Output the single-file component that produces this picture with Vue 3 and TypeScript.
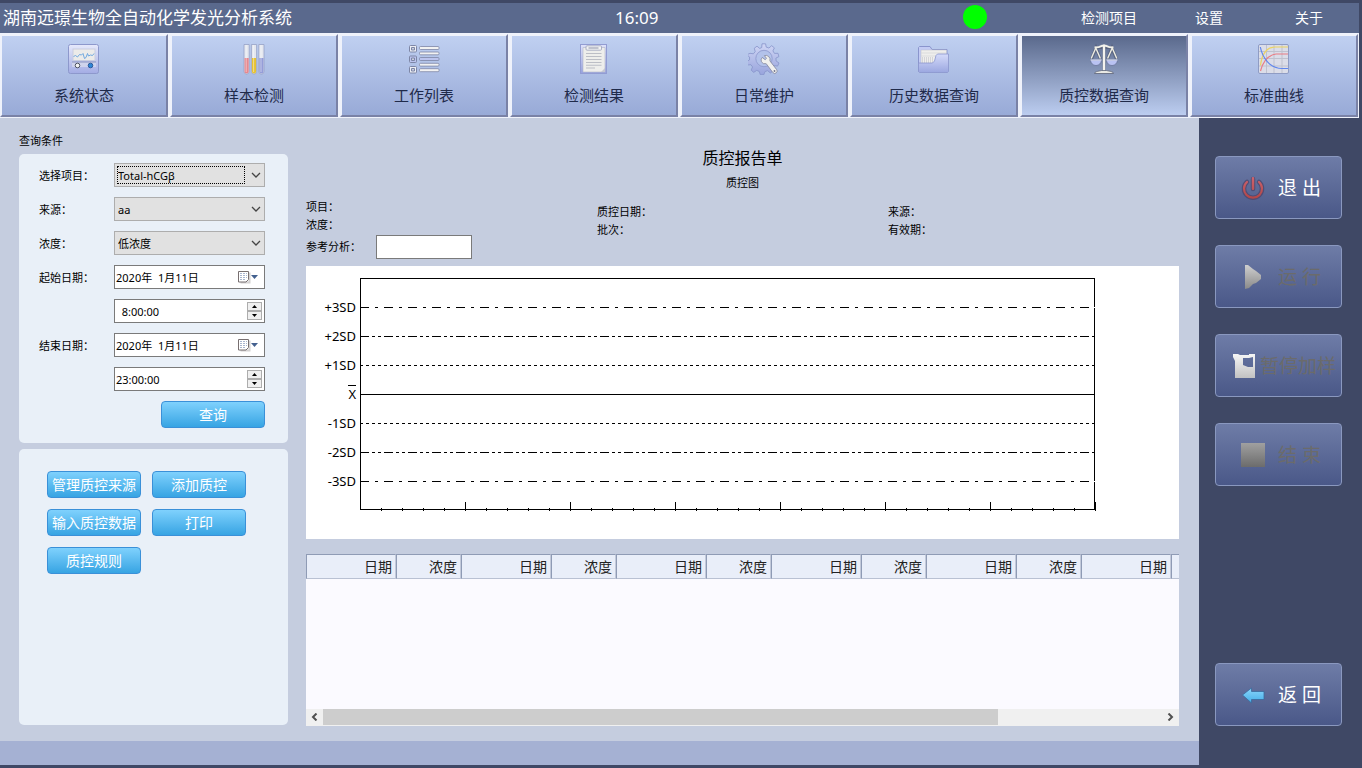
<script setup lang="ts">
import { ref } from 'vue'

interface NavItem { icon: string; label: string }

const navItems: NavItem[] = [
  { icon: 'monitor', label: '系统状态' },
  { icon: 'tubes', label: '样本检测' },
  { icon: 'list', label: '工作列表' },
  { icon: 'clipboard', label: '检测结果' },
  { icon: 'gear', label: '日常维护' },
  { icon: 'folder', label: '历史数据查询' },
  { icon: 'scales', label: '质控数据查询' },
  { icon: 'curves', label: '标准曲线' },
]
const active = ref('scales')

const project = ref('Total-hCGβ')
const source = ref('aa')
const level = ref('低浓度')
const startDate = ref('2020年  1月11日')
const startTime = ref('  8:00:00')
const endDate = ref('2020年  1月11日')
const endTime = ref('23:00:00')
const reference = ref('')

const tools = ['管理质控来源', '添加质控', '输入质控数据', '打印', '质控规则']

const sdLines = [
  { label: '+3SD', y: 41, dash: '9 6 3 6' },
  { label: '+2SD', y: 70, dash: '9 3 3 3 3 3' },
  { label: '+1SD', y: 99, dash: '3 3' },
  { label: 'X', y: 128, dash: 'none' },
  { label: '-1SD', y: 157, dash: '3 3' },
  { label: '-2SD', y: 186, dash: '9 3 3 3 3 3' },
  { label: '-3SD', y: 215, dash: '9 6 3 6' },
]
const ticks = Array.from({ length: 35 }, (_, i) => ({ x: 54 + (i + 1) * 21, major: (i + 1) % 5 === 0 }))

const columns = Array.from({ length: 11 }, (_, i) => (i % 2 === 0 ? '日期' : '浓度'))
const gridBox = ref<HTMLElement | null>(null)
function scrollGrid(dx: number) {
  if (gridBox.value) gridBox.value.scrollLeft += dx
}
</script>

<template>
  <div class="app">
    <header class="titlebar">
      <h1>湖南远璟生物全自动化学发光分析系统</h1>
      <time class="clock">16:09</time>
      <span class="lamp" role="img" aria-label="在线"></span>
      <a href="#items">检测项目</a>
      <a href="#settings">设置</a>
      <a href="#about">关于</a>
    </header>

    <nav class="nav">
      <button
        v-for="item in navItems"
        :key="item.icon"
        type="button"
        class="tile"
        :class="{ on: item.icon === active }"
        @click="active = item.icon"
      >
        <svg v-if="item.icon === 'monitor'" width="32" height="32" viewBox="0 0 32 32">
          <defs>
            <linearGradient id="mon" x1="0" y1="0" x2="0" y2="1"><stop offset="0" stop-color="#e6e9fb" /><stop offset="1" stop-color="#a3ace4" /></linearGradient>
          </defs>
          <rect x="0.5" y="1.5" width="30" height="29" rx="2" fill="url(#mon)" stroke="#8d98cc" />
          <rect x="5" y="6" width="22" height="11.5" fill="#ecebe9" stroke="#c9cde0" />
          <path d="M5.500 13.500l2-1 2 1.500 2-2.500 2 .5 1.500-1.500 1.500 5 1.500-1 1.500-4 1 2.500 2-1 2 .5 1.500-2" fill="none" stroke="#6fa8e0" />
          <path d="M4 19h24v5H4z" fill="#d5d8ec" opacity="0.8" />
          <path d="M4 19h24" stroke="#8791bd" />
          <circle cx="9.500" cy="22.500" r="2.300" fill="#f4f4f4" stroke="#4e5262" />
          <circle cx="22.500" cy="22.500" r="2.300" fill="#2d86d8" stroke="#2d5a98" />
        </svg>
        <svg v-else-if="item.icon === 'tubes'" width="32" height="32" viewBox="0 0 32 32">
          <g stroke="#96a1c6" stroke-width="0.8">
            <path d="M6 1.500h5.200V28.500a2.600 2.600 0 0 1-5.200 0z" fill="#e4e7ef" />
            <path d="M13.400 1.500h5.200V28.500a2.600 2.600 0 0 1-5.200 0z" fill="#e4e7ef" />
            <path d="M20.800 1.500H26V28.500a2.600 2.600 0 0 1-5.200 0z" fill="#e4e7ef" />
          </g>
          <path d="M6.500 15h4.200v13.500a2.100 2.100 0 0 1-4.200 0z" fill="#e68890" />
          <path d="M13.900 15h4.200v13.500a2.100 2.100 0 0 1-4.200 0z" fill="#e6c232" />
          <path d="M21.300 15h4.200v13.500a2.100 2.100 0 0 1-4.200 0z" fill="#959dd8" />
          <path d="M8.200 2v27M15.600 2v27M23 2v27" stroke="#fff" stroke-width="1" opacity="0.45" />
        </svg>
        <svg v-else-if="item.icon === 'list'" width="32" height="32" viewBox="0 0 32 32">
          <g stroke="#7d86a6">
            <rect x="1.500" y="2.500" width="7" height="6.500" rx="1" fill="#eceef4" />
            <rect x="1.500" y="13" width="7" height="6.500" rx="1" fill="#bcc4ee" />
            <rect x="1.500" y="23.500" width="7" height="6.500" rx="1" fill="#eceef4" />
            <path d="M3.500 4.500h3v2.500h-3zM3.500 15h3v2.500h-3zM3.500 25.500h3V28h-3z" fill="#c9cede" />
          </g>
          <g stroke="#7d86a6" stroke-width="0.8" fill="#f2f2f2">
            <rect x="11.500" y="3.500" width="19.500" height="3" rx="1" />
            <rect x="11.500" y="9" width="19.500" height="2.800" rx="1" />
            <rect x="11.500" y="14.500" width="19.500" height="3" rx="1" fill="#bcc4ee" />
            <rect x="11.500" y="20.300" width="19.500" height="2.800" rx="1" />
            <rect x="11.500" y="25.700" width="19.500" height="3" rx="1" />
          </g>
        </svg>
        <svg v-else-if="item.icon === 'clipboard'" width="32" height="32" viewBox="0 0 32 32">
          <defs>
            <linearGradient id="clip" x1="0" y1="0" x2="0" y2="1"><stop offset="0" stop-color="#dfe2fa" /><stop offset="1" stop-color="#97a2de" /></linearGradient>
          </defs>
          <rect x="2.500" y="1.500" width="26" height="29" fill="url(#clip)" stroke="#929cd2" />
          <path d="M5 4.500h22V29H5z" fill="#eeeeec" stroke="#b2b5c8" stroke-width="0.6" />
          <path d="M23 29l4-4v4z" fill="#c5c7d2" />
          <rect x="8" y="2.800" width="15.500" height="4.400" rx="1" fill="#f2f2f2" stroke="#9ba1ba" stroke-width="0.8" />
          <path d="M10.500 5h10" stroke="#8c91a8" />
          <path d="M8 10.500h15.500M8 13.500h15.500M8 16.500h15.500M8 19.500h15.500M8 22.300h15.500M8 25h9" stroke="#bcbec6" stroke-width="1.100" />
        </svg>
        <svg v-else-if="item.icon === 'gear'" width="32" height="32" viewBox="0 0 32 32">
          <defs>
            <linearGradient id="gearfill" x1="0" y1="0" x2="0" y2="1"><stop offset="0" stop-color="#d0d6f5" /><stop offset="1" stop-color="#98a4dc" /></linearGradient>
          </defs>
          <path fill="url(#gearfill)" stroke="#8793c9" stroke-width="0.8" stroke-linejoin="round" d="M14 .8h3.600l.6 3.300 2.700.9L23.700 2.700l2.700 2.200-1.500 3 1.600 2.500 3.500-.1.900 3.300-3 1.500.2 2.900 2.900 2-1.400 3.100-3.400-.5-2 2.100 1 3.300-2.900 2-2.600-2.300-2.700.8-1.200 3.200h-3.500l-1.100-3.300-2.500-1-3 2-2.600-2.300 1.500-3.100-1.700-2.300-3.400.3-1-3.300 3-1.800.1-2.900-2.800-2.200L2 10.300l3.400.5L7.200 8.600 6.300 5.200 9 3.200l2.700 2.200 2-.8z" />
          <circle cx="16" cy="15.500" r="8.200" fill="#b3c2ea" stroke="#8b97cc" stroke-width="0.800" />
          <path d="M13.300 18.600a4.300 4.300 0 0 1 1-4.200l2.800 2.300 1.400-1.300-2.100-2.800a4.300 4.300 0 0 1 5.500 5.300l6.600 8.500a2.400 2.400 0 0 1-3.600 3.200l-6.700-8.900a4.400 4.400 0 0 1-4.900-2.100z" fill="#f0f0ee" stroke="#82859c" stroke-width="0.800" />
          <circle cx="26.500" cy="28" r="0.900" fill="#70748c" />
        </svg>
        <svg v-else-if="item.icon === 'folder'" width="32" height="32" viewBox="0 0 32 32">
          <defs>
            <linearGradient id="fold" x1="0" y1="0" x2="0" y2="1"><stop offset="0" stop-color="#d5dbfa" /><stop offset="1" stop-color="#9ba7e0" /></linearGradient>
          </defs>
          <path d="M.5 4.500l1-1h10.500l2 3h15v22H.5z" fill="#c3cbf4" stroke="#8a95cd" />
          <path d="M3 7h25.500v4l2 2v9H3z" fill="#efeeec" stroke="#b9bccb" stroke-width="0.500" />
          <path d="M3 10h25M3 13h25" stroke="#d4d4d8" stroke-width="0.700" />
          <path d="M4.500 14v6M6.500 14v6M8.500 14v6M10.500 14v6M12.500 14v6M14.500 14v6" stroke="#c8c9d0" stroke-width="0.700" />
          <path d="M.5 20h14l2-2 1.500-5.500 1.500-1.500H30.500v17.500l-1 1H1.500l-1-1z" fill="url(#fold)" stroke="#8a95cd" stroke-width="0.800" />
        </svg>
        <svg v-else-if="item.icon === 'scales'" width="32" height="32" viewBox="0 0 32 32">
          <g stroke="#4b5266" stroke-width="3.200" fill="none" opacity="0.55">
            <path d="M16 2v26M7 4.500h18M3.500 16L8 5l4.500 11M19.500 16L24 5l4.500 11" />
          </g>
          <path d="M3.200 15.500L7.800 5l4.600 10.500M19.600 15.500L24.200 5l4.600 10.500" fill="none" stroke="#eeede2" stroke-width="1.400" />
          <path d="M6.500 4.600c4-.2 6-1 7.500-1.800h4c1.500.8 3.500 1.600 7.500 1.800" fill="none" stroke="#f1f0e8" stroke-width="2" />
          <path d="M14.800 2.200L16 1l1.200 1.200v26.300h-2.400z" fill="#f4f3ee" />
          <path d="M2.500 17h11a5.500 5.500 0 0 1-11 0zM18.500 17h11a5.500 5.500 0 0 1-11 0z" fill="#b9c2f2" stroke="#596388" stroke-width="0.600" />
          <path d="M2.500 17h11M18.500 17h11" stroke="#eceefa" />
          <path d="M6.500 30.500c0-1.800 3.500-2.200 7-3h5c3.500.8 7 1.200 7 3z" fill="#e9e9e4" stroke="#5c6377" stroke-width="0.800" />
        </svg>
        <svg v-else width="32" height="32" viewBox="0 0 32 32">
          <rect x="0.500" y="1.500" width="30" height="29" rx="1.500" fill="#dbdde8" stroke="#8f9cc4" />
          <path d="M8.500 2v28M16 2v28M24 2v28M1 8.500h29M1 15.500h29M1 23h29" stroke="#bfc1ce" />
          <path d="M2.500 22.500C4 10 9 4.500 17 4h13" fill="none" stroke="#ecd460" stroke-width="1.200" />
          <path d="M2.500 28C4.500 20 8.500 12.500 18 11h12" fill="none" stroke="#ea7d84" stroke-width="1.200" />
          <path d="M2.300 4C4.500 15 12 25.300 24 25.500h6" fill="none" stroke="#5f86ee" stroke-width="1.200" />
        </svg>
        <span>{{ item.label }}</span>
      </button>
    </nav>

    <div class="body">
      <div class="workspace">
        <main class="main">
          <section class="left">
            <h2>查询条件</h2>
            <form class="panel query" @submit.prevent>
              <label for="project">选择项目：</label>
              <div class="combo focused">
                <select id="project" v-model="project"><option>Total-hCGβ</option></select>
                <svg class="chev" width="10" height="6" viewBox="0 0 10 6"><path d="M1 1l4 4 4-4" /></svg>
              </div>
              <label for="source">来源：</label>
              <div class="combo">
                <select id="source" v-model="source"><option>aa</option></select>
                <svg class="chev" width="10" height="6" viewBox="0 0 10 6"><path d="M1 1l4 4 4-4" /></svg>
              </div>
              <label for="level">浓度：</label>
              <div class="combo">
                <select id="level" v-model="level"><option>低浓度</option></select>
                <svg class="chev" width="10" height="6" viewBox="0 0 10 6"><path d="M1 1l4 4 4-4" /></svg>
              </div>
              <label for="start-date">起始日期：</label>
              <div class="field">
                <input id="start-date" v-model="startDate" type="text" />
                <button type="button" class="cal" aria-label="选择起始日期">
                  <svg width="22" height="14" viewBox="0 0 22 14">
                    <path d="M2.500 12.500h9v-10" fill="none" stroke="#b8b4b4" stroke-width="2" opacity="0.6" />
                    <path d="M.5 1.500h10v8l-2.500 2.500H.5z" fill="#fff" stroke="#776f70" />
                    <path d="M2 3.500h7M2 5.500h7M2 7.500h7M2 9.500h5" stroke="#a9b6cf" stroke-dasharray="2 1" />
                    <path d="M13 5h7l-3.500 4z" fill="#44618f" />
                  </svg>
                </button>
              </div>
              <span></span>
              <div class="field">
                <input v-model="startTime" type="text" aria-label="起始时间" />
                <span class="spin">
                  <button type="button" aria-label="增加"><svg width="5" height="3" viewBox="0 0 5 3"><path d="M0 3h5L2.500 0z" /></svg></button>
                  <button type="button" aria-label="减少"><svg width="5" height="3" viewBox="0 0 5 3"><path d="M0 0h5L2.500 3z" /></svg></button>
                </span>
              </div>
              <label for="end-date">结束日期：</label>
              <div class="field">
                <input id="end-date" v-model="endDate" type="text" />
                <button type="button" class="cal" aria-label="选择结束日期">
                  <svg width="22" height="14" viewBox="0 0 22 14">
                    <path d="M2.500 12.500h9v-10" fill="none" stroke="#b8b4b4" stroke-width="2" opacity="0.6" />
                    <path d="M.5 1.500h10v8l-2.500 2.500H.5z" fill="#fff" stroke="#776f70" />
                    <path d="M2 3.500h7M2 5.500h7M2 7.500h7M2 9.500h5" stroke="#a9b6cf" stroke-dasharray="2 1" />
                    <path d="M13 5h7l-3.500 4z" fill="#44618f" />
                  </svg>
                </button>
              </div>
              <span></span>
              <div class="field">
                <input v-model="endTime" type="text" aria-label="结束时间" />
                <span class="spin">
                  <button type="button" aria-label="增加"><svg width="5" height="3" viewBox="0 0 5 3"><path d="M0 3h5L2.500 0z" /></svg></button>
                  <button type="button" aria-label="减少"><svg width="5" height="3" viewBox="0 0 5 3"><path d="M0 0h5L2.500 3z" /></svg></button>
                </span>
              </div>
              <button type="submit" class="blue search">查询</button>
            </form>
            <div class="panel tools">
              <button v-for="t in tools" :key="t" type="button" class="blue">{{ t }}</button>
            </div>
          </section>

          <section class="report">
            <h2>质控报告单</h2>
            <h3>质控图</h3>
            <div class="info">
              <div>
                <p>项目：</p>
                <p>浓度：</p>
                <div class="ref">
                  <label for="reference">参考分析：</label>
                  <input id="reference" v-model="reference" type="text" />
                </div>
              </div>
              <div class="low">
                <p>质控日期：</p>
                <p>批次：</p>
              </div>
              <div class="low">
                <p>来源：</p>
                <p>有效期：</p>
              </div>
            </div>

            <div class="chart">
              <svg width="100%" height="273" viewBox="0 0 873 273" shape-rendering="crispEdges">
                <rect x="54.5" y="12.5" width="734" height="231" fill="none" stroke="#000" />
                <g v-for="l in sdLines" :key="l.label">
                  <path :d="`M55 ${l.y + 0.5}H789`" stroke="#fff" />
                  <path :d="`M54 ${l.y + 0.5}H789`" stroke="#000" :stroke-dasharray="l.dash" />
                  <text x="50" :y="l.y + 5" text-anchor="end">{{ l.label }}</text>
                </g>
                <path d="M42 119.500h8" stroke="#000" />
                <path
                  v-for="t in ticks"
                  :key="t.x"
                  :d="t.major ? `M${t.x + 0.5} 236v9` : `M${t.x + 0.5} 242v3`"
                  stroke="#000"
                />
              </svg>
            </div>

            <div class="grid">
              <div ref="gridBox" class="gridbox">
                <table>
                  <thead>
                    <tr>
                      <th v-for="(c, i) in columns" :key="i" :class="i % 2 ? 'narrow' : 'wide'" scope="col">{{ c }}</th>
                      <th></th>
                    </tr>
                  </thead>
                </table>
              </div>
              <div class="scroll">
                <button type="button" aria-label="向左滚动" @click="scrollGrid(-40)">
                  <svg width="7" height="8" viewBox="0 0 7 8"><path d="M5.500 .5L2 4l3.500 3.500" /></svg>
                </button>
                <div class="track"><div class="thumb"></div></div>
                <button type="button" aria-label="向右滚动" @click="scrollGrid(40)">
                  <svg width="7" height="8" viewBox="0 0 7 8"><path d="M1.500 .5L5 4 1.500 7.500" /></svg>
                </button>
              </div>
            </div>
          </section>
        </main>
        <footer class="status"></footer>
      </div>

      <aside class="side">
        <button type="button" class="act">
          <svg width="24" height="24" viewBox="0 0 24 24">
            <defs>
              <linearGradient id="pw" gradientUnits="userSpaceOnUse" x1="0" y1="0" x2="0" y2="24"><stop offset="0" stop-color="#cf6570" /><stop offset="1" stop-color="#b04444" /></linearGradient>
            </defs>
            <g fill="none" stroke-linecap="round">
              <path d="M6 6a9 9 0 1 0 12 0M12 3v10" stroke="#4e466c" stroke-width="4.500" opacity="0.8" />
              <path d="M6 6a9 9 0 1 0 12 0" stroke="url(#pw)" stroke-width="2.200" />
            </g>
            <rect x="10.800" y="1" width="2.400" height="13" rx="1" fill="url(#pw)" />
          </svg>
          <span>退 出</span>
        </button>
        <button type="button" class="act" disabled>
          <svg width="24" height="24" viewBox="0 0 24 24">
            <defs>
              <linearGradient id="pl" x1="0" y1="0" x2="0" y2="1"><stop offset="0" stop-color="#cfcfcf" /><stop offset="1" stop-color="#8a8a8a" /></linearGradient>
            </defs>
            <path d="M4 0h3l5 4 3 2 5 4v4l-5 4-3 1-4 4-4 1z" fill="url(#pl)" />
          </svg>
          <span>运 行</span>
        </button>
        <button type="button" class="act tight" disabled>
          <svg width="24" height="24" viewBox="0 0 24 24">
            <defs>
              <linearGradient id="ps" x1="0" y1="0" x2="0" y2="1"><stop offset="0" stop-color="#f6f6f6" /><stop offset="1" stop-color="#c2c2c2" /></linearGradient>
            </defs>
            <path fill-rule="evenodd" d="M0 0h5l2 1h9V0h6v24H2V7L0 3zM10 4v7l5 2h5V3l-4 1z" fill="url(#ps)" />
          </svg>
          <span>暂停加样</span>
        </button>
        <button type="button" class="act" disabled>
          <svg width="24" height="24" viewBox="0 0 24 24">
            <defs>
              <linearGradient id="st" x1="0" y1="0" x2="0" y2="1"><stop offset="0" stop-color="#a0a0a0" /><stop offset="1" stop-color="#6c6c6c" /></linearGradient>
            </defs>
            <rect width="24" height="24" fill="url(#st)" />
          </svg>
          <span>结 束</span>
        </button>
        <button type="button" class="act back">
          <svg width="24" height="24" viewBox="0 0 24 24">
            <defs>
              <linearGradient id="bk" x1="0" y1="0" x2="0" y2="1"><stop offset="0" stop-color="#8bd6fb" /><stop offset="1" stop-color="#44aee8" /></linearGradient>
            </defs>
            <path d="M1.500 12L10.500 5v3.500H23v8H10.500V20z" fill="url(#bk)" stroke="#3a6a9c" stroke-width="0.800" />
          </svg>
          <span>返 回</span>
        </button>
      </aside>
    </div>
  </div>
</template>

<style>
body {
  margin: 0;
  background: #3f4865;
}
</style>

<style scoped>
.app {
  display: flex;
  flex-direction: column;
  box-sizing: border-box;
  min-height: 100vh;
  padding-top: 3px;
  background: #3f4865;
  color: #000;
  font-family: "Noto Sans", "Noto Sans CJK SC", sans-serif;
  font-size: 11px;
}
.app * {
  box-sizing: border-box;
}
h1, h2, h3, p {
  margin: 0;
  font-weight: 400;
}
button, input, select {
  margin: 0;
  padding: 0;
  font: inherit;
  color: inherit;
}
svg {
  display: block;
  flex: none;
}

.titlebar {
  display: grid;
  grid-template-columns: 612fr 348fr 118fr 114fr 100fr 64fr;
  align-items: center;
  height: 30px;
  margin-right: 3px;
  padding-left: 3px;
  background: #5a698d;
  color: #fff;
  white-space: nowrap;
}
.titlebar h1, .clock {
  font-size: 17px;
  line-height: 24px;
}
.titlebar a {
  color: #fff;
  font-size: 14px;
  line-height: 24px;
  text-decoration: none;
}
.lamp {
  width: 24px;
  height: 24px;
  border-radius: 50%;
  background: #0f0;
  margin-bottom: 2px;
}

.nav {
  display: flex;
  gap: 2px;
  margin-right: 3px;
  padding: 1px 1px 1px 0;
  background: #eff2fb;
}
.tile {
  flex: 1;
  display: flex;
  flex-direction: column;
  align-items: center;
  gap: 8px;
  height: 83px;
  padding-top: 7px;
  border: 2px solid;
  border-color: #eff2fb #7a82a6 #7a82a6 #eff2fb;
  background: linear-gradient(#c0d0f1, #98aad7);
  color: #1f2a4a;
  font-size: 15px;
  line-height: 24px;
}
.tile.on {
  background: linear-gradient(#5a698c, #bccdf0);
}

.body {
  flex: 1;
  display: flex;
}
.workspace {
  flex: 1;
  min-width: 0;
  display: flex;
  flex-direction: column;
  padding-bottom: 3px;
}
.main {
  flex: 1;
  display: flex;
  gap: 18px;
  padding: 0 20px 15px 19px;
  background: #c5cddf;
}
.status {
  height: 24px;
  background: #a5b1d3;
}

.left {
  flex: none;
  width: 269px;
  display: flex;
  flex-direction: column;
  padding: 10px 0 1px;
}
.left h2 {
  font-size: 11px;
  line-height: 26px;
}
.panel {
  display: grid;
  align-content: start;
  border-radius: 5px;
  background: #e9f0f8;
}
.query {
  grid-template-columns: 75px minmax(0, 1fr);
  gap: 10px 0;
  align-items: center;
  padding: 9px 23px 15px 20px;
}
.combo, .field {
  position: relative;
  display: flex;
  align-items: center;
  height: 24px;
}
.combo select {
  width: 100%;
  height: 24px;
  padding: 0 20px 0 3px;
  border: 1px solid #adadad;
  border-radius: 0;
  background: #e1e1e1;
  appearance: none;
}
.combo.focused::after {
  content: "";
  position: absolute;
  inset: 3px 20px 3px 3px;
  border: 1px dotted #000;
  pointer-events: none;
}
.chev {
  position: absolute;
  right: 4px;
  pointer-events: none;
}
.chev path {
  fill: none;
  stroke: #444;
  stroke-width: 1.3;
}
.field {
  border: 1px solid #7a7a7a;
  background: #fff;
}
.field input {
  flex: 1;
  min-width: 0;
  height: 22px;
  padding-left: 1px;
  border: 0;
  background: none;
  white-space: pre;
}
.cal {
  flex: none;
  margin-right: 4px;
  border: 0;
  background: none;
}
.spin {
  flex: none;
  display: grid;
  margin-right: 2px;
}
.spin button {
  display: grid;
  place-items: center;
  width: 15px;
  height: 9px;
  border: 1px solid #adadad;
  background: #f0f0f0;
}
.blue {
  height: 27px;
  border: 1px solid #3a90d8;
  border-radius: 4px;
  background: linear-gradient(#7fd1fd, #37a4e3);
  color: #fff;
  font-size: 14px;
  line-height: 24px;
  white-space: nowrap;
}
.search {
  grid-column: 2;
  justify-self: end;
  width: 104px;
}
.tools {
  flex: 1;
  grid-template-columns: 94px 94px;
  gap: 11px;
  margin-top: 6px;
  padding: 22px 28px;
}

.report {
  flex: 1;
  min-width: 0;
  display: flex;
  flex-direction: column;
  padding-top: 28px;
}
.report h2 {
  font-size: 16px;
  line-height: 24px;
  text-align: center;
}
.report h3 {
  margin: 4px 0 6px;
  font-size: 11px;
  line-height: 18px;
  text-align: center;
}
.info {
  display: grid;
  grid-template-columns: repeat(3, 1fr);
  line-height: 18px;
}
.low {
  padding-top: 5px;
}
.ref {
  display: flex;
  align-items: center;
  margin-top: 1px;
}
.ref label {
  width: 70px;
}
.ref input {
  width: 96px;
  height: 24px;
  border: 1px solid #7a7a7a;
  background: #fff;
}
.chart {
  margin-top: 7px;
  background: #fff;
}
.chart text {
  font-size: 13px;
}
.grid {
  flex: 1;
  display: flex;
  flex-direction: column;
  margin-top: 15px;
  background: #fbfaff;
}
.gridbox {
  flex: 1;
  overflow: hidden;
}
table {
  width: 1085px;
  table-layout: fixed;
  border-collapse: separate;
  border-spacing: 0;
}
th {
  height: 25px;
  padding: 0 3px 0 0;
  border: 1px solid;
  border-color: #8f9bb5 #c3cadb #b9c1d3 #8f9bb5;
  background: #e9eef9;
  color: #222;
  font-size: 14px;
  font-weight: 400;
  line-height: 22px;
  text-align: right;
}
.wide {
  width: 90px;
}
.narrow {
  width: 65px;
}
.scroll {
  display: flex;
  height: 17px;
  padding-bottom: 1px;
  background: #f0f0f0;
}
.scroll button {
  display: grid;
  place-items: center;
  width: 17px;
  border: 0;
  background: none;
}
.scroll path {
  fill: none;
  stroke: #505050;
  stroke-width: 2;
}
.track {
  flex: 1;
}
.thumb {
  width: 80.5%;
  height: 100%;
  background: #cdcdcd;
}

.side {
  flex: none;
  width: 163px;
  display: flex;
  flex-direction: column;
  gap: 26px;
  padding: 38px 20px 42px 16px;
}
.act {
  display: flex;
  align-items: center;
  gap: 13px;
  height: 63px;
  padding-left: 25px;
  border: 1px solid #8a98bf;
  border-radius: 4px;
  background: linear-gradient(#6e7ca7, #4a5888);
  color: #fff;
  font-size: 19px;
  line-height: 24px;
  white-space: nowrap;
}
.act:disabled {
  color: #6b6b6b;
}
.tight {
  gap: 3px;
  padding-left: 17px;
}
.back {
  margin-top: auto;
}
</style>
